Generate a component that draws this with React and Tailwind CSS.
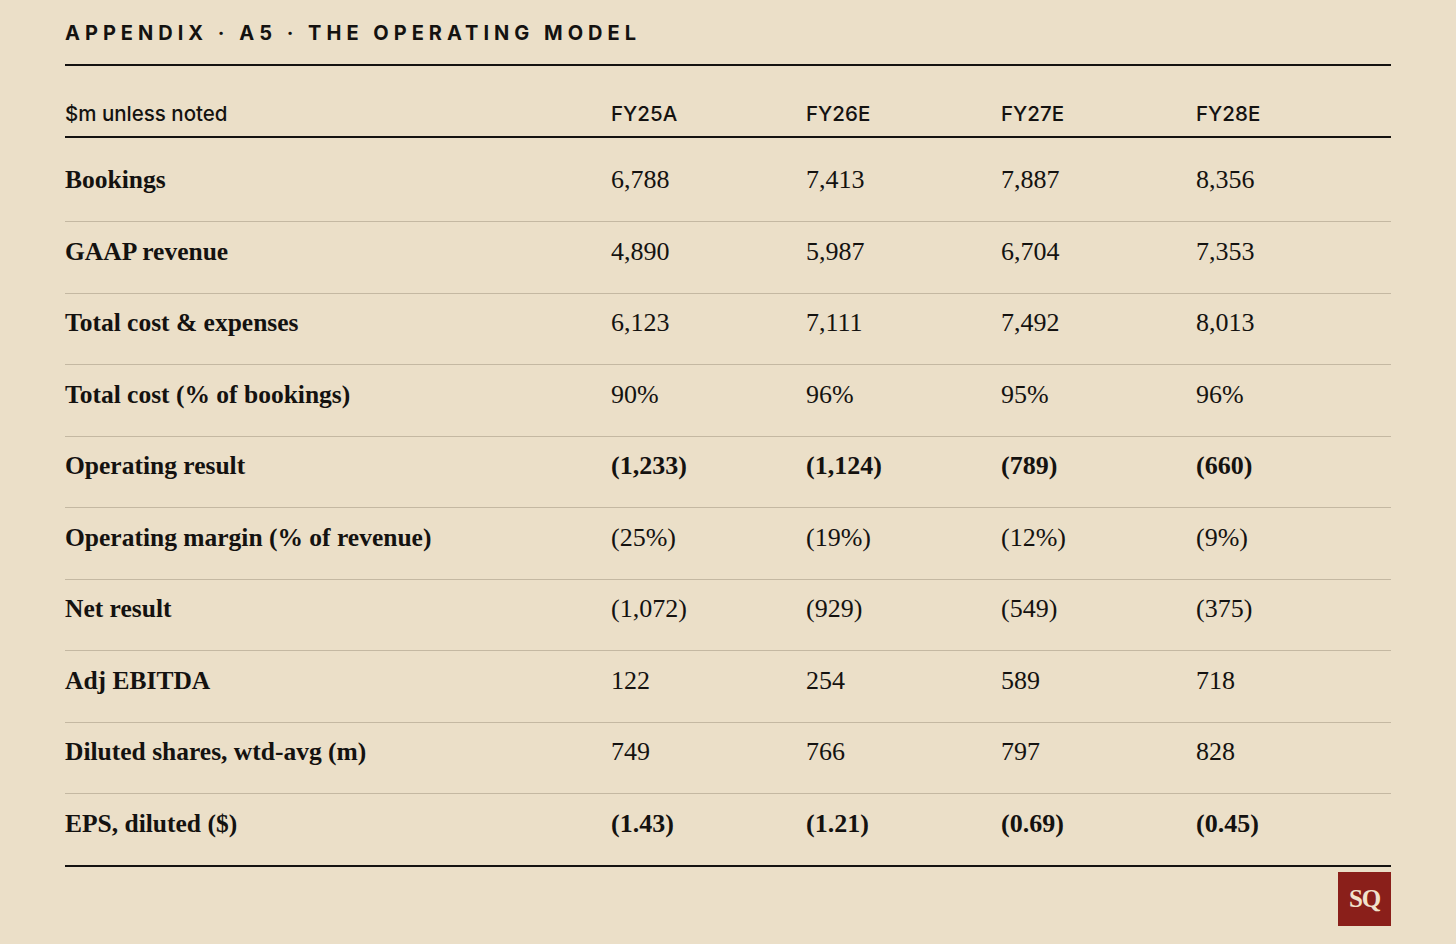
import React from 'react';

const rows = [
  { label: 'Bookings', vals: ['6,788', '7,413', '7,887', '8,356'] },
  { label: 'GAAP revenue', vals: ['4,890', '5,987', '6,704', '7,353'] },
  { label: 'Total cost & expenses', vals: ['6,123', '7,111', '7,492', '8,013'] },
  { label: 'Total cost (% of bookings)', vals: ['90%', '96%', '95%', '96%'] },
  { label: 'Operating result', vals: ['(1,233)', '(1,124)', '(789)', '(660)'], bold: true },
  { label: 'Operating margin (% of revenue)', vals: ['(25%)', '(19%)', '(12%)', '(9%)'] },
  { label: 'Net result', vals: ['(1,072)', '(929)', '(549)', '(375)'] },
  { label: 'Adj EBITDA', vals: ['122', '254', '589', '718'] },
  { label: 'Diluted shares, wtd-avg (m)', vals: ['749', '766', '797', '828'] },
  { label: 'EPS, diluted ($)', vals: ['(1.43)', '(1.21)', '(0.69)', '(0.45)'], bold: true },
];

const cols = ['FY25A', 'FY26E', 'FY27E', 'FY28E'];
const serif = "font-['Liberation_Serif',serif]";
const sans = "font-['Inter','Liberation_Sans',sans-serif]";

export default function App() {
  return (
    <div className="min-h-[944px] w-full bg-[#ebdfc8] text-[#141210]">
      <div className="mx-[65px] pt-[21px]">
        <h1 className={`${sans} text-[20px] font-bold tracking-[0.25em] leading-[24px] pb-[19px] border-b-2 border-[#141210]`}>
          APPENDIX · A5 · THE OPERATING MODEL
        </h1>

        <div className={`${sans} grid grid-cols-[546px_195px_195px_195px_1fr] items-end pt-[36px] pb-[10px] border-b-2 border-[#141210] text-[20.5px] font-medium leading-[24px]`}>
          <div>$m unless noted</div>
          {cols.map((c) => (
            <div key={c}>{c}</div>
          ))}
          <div />
        </div>

        {rows.map((r, i) => (
          <div
            key={r.label}
            className={`${serif} grid grid-cols-[546px_195px_195px_195px_1fr] items-center leading-[30px] ${i === 0 ? 'pt-[27px]' : 'pt-[14.5px]'} pb-[26px] ${i < rows.length - 1 ? 'border-b border-[#c4b8a2]' : 'border-b-2 border-[#141210]'}`}
          >
            <div className="font-bold text-[25.5px]">{r.label}</div>
            {r.vals.map((v, j) => (
              <div key={j} className={`text-[26px] ${r.bold ? 'font-bold' : ''}`}>{v}</div>
            ))}
            <div />
          </div>
        ))}

        <div className="flex justify-end pt-[5px]">
          <div className={`${serif} w-[53px] h-[54px] bg-[#8a1f1a] text-[#f1e3cc] flex items-center justify-center font-bold text-[25px] tracking-[-0.05em]`}>
            SQ
          </div>
        </div>
      </div>
    </div>
  );
}
